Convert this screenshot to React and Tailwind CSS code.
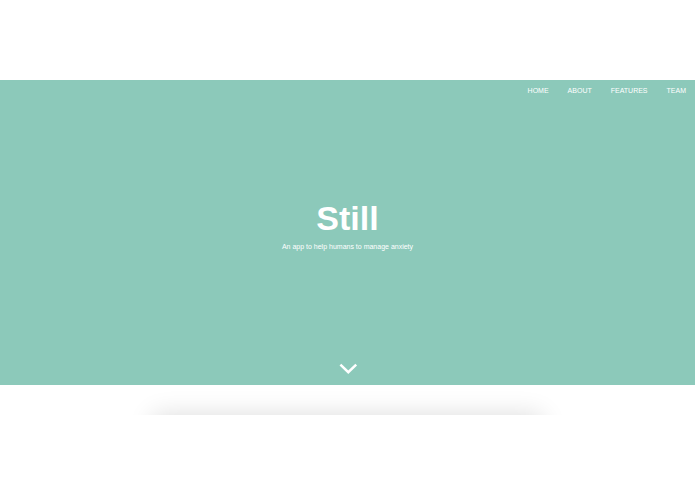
import React from 'react';

const links = [
  { label: 'HOME', href: '#home' },
  { label: 'ABOUT', href: '#about' },
  { label: 'FEATURES', href: '#features' },
  { label: 'TEAM', href: '#team' },
];

const Navbar = () => (
  <nav className="flex justify-end gap-[19px] px-[9px] pt-1.5 text-[7px] leading-[10px]">
    {links.map(link => (
      <a key={link.label} href={link.href} className="hover:underline">
        {link.label}
      </a>
    ))}
  </nav>
);

const Hero = () => (
  <header id="home" className="flex h-[305px] flex-col bg-[#8cc9ba] text-white">
    <Navbar />
    <div className="flex flex-1 flex-col items-center justify-center pb-2 text-center">
      <h1 className="text-[34px] leading-10 font-bold">Still</h1>
      <p className="mt-1 text-[7px] leading-[10px]">An app to help humans to manage anxiety</p>
    </div>
    <a href="#about" aria-label="Scroll to about" className="mx-auto mb-2">
      <svg width="20" height="16" viewBox="0 0 20 16" fill="none" stroke="currentColor" strokeWidth="2.5">
        <path d="M2.4 3.6 10.3 11.2 18.2 3.6" />
      </svg>
    </a>
  </header>
);

const App = () => (
  <div className="bg-white py-20 font-['Liberation_Sans',Arial,sans-serif]">
    <Hero />
    {/* Top edge of the next card, only its shadow is in view */}
    <main id="about" className="h-[30px] overflow-hidden pt-[30px]">
      <section className="mx-auto h-40 w-[56%] bg-white shadow-[0_0_24px_0_rgba(0,0,0,0.14)]" />
    </main>
  </div>
);

export default App;
